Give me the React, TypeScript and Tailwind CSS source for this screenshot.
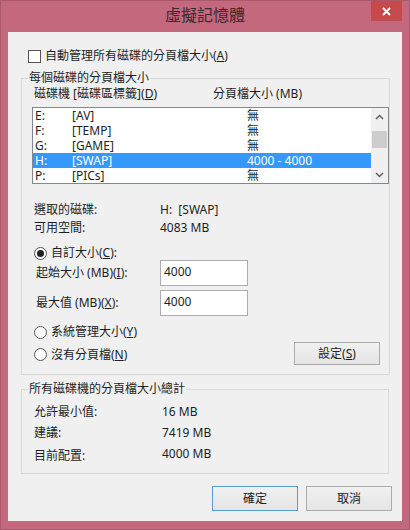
import React from "react";

const drives = [
  { d: "E:", label: "[AV]", size: "無" },
  { d: "F:", label: "[TEMP]", size: "無" },
  { d: "G:", label: "[GAME]", size: "無" },
  { d: "H:", label: "[SWAP]", size: "4000 - 4000", sel: true },
  { d: "P:", label: "[PICs]", size: "無" },
];

function Radio({ checked }: { checked?: boolean }) {
  return (
    <span className="w-[13px] h-[13px] rounded-full border border-[#555] bg-white flex items-center justify-center shrink-0">
      {checked && <span className="w-[7px] h-[7px] rounded-full bg-[#222]" />}
    </span>
  );
}

function Chevron({ up }: { up?: boolean }) {
  return (
    <svg width="9" height="6" viewBox="0 0 9 6">
      <path
        d={up ? "M1 5 L4.5 1.5 L8 5" : "M1 1 L4.5 4.5 L8 1"}
        fill="none"
        stroke="#606060"
        strokeWidth="1.5"
      />
    </svg>
  );
}

function Btn({ children, primary }: { children: React.ReactNode; primary?: boolean }) {
  return (
    <button
      className={
        primary
          ? "w-[86px] h-[25px] border border-[#5a9bd6] bg-gradient-to-b from-[#f0f0f0] to-[#e5e5e5] text-[12px] leading-[15px] text-[#222]"
          : "w-[86px] h-[25px] border border-[#acacac] bg-gradient-to-b from-[#f0f0f0] to-[#e5e5e5] text-[12px] leading-[15px] text-[#222]"
      }
    >
      {children}
    </button>
  );
}

export default function App() {
  return (
    <div className="w-[410px] h-[530px] bg-[#c3687d] border border-[#a9596b] flex flex-col relative [font-family:'Noto_Sans','Noto_Sans_CJK_TC',sans-serif] text-[#1e1e1e]">
      {/* title bar */}
      <div className="h-[31px] flex items-center justify-center pb-[3px]">
        <span className="text-[16px] leading-[20px] text-[#3a2a30]">虛擬記憶體</span>
      </div>
      <div className="absolute top-0 right-[7px] w-[31px] h-[20px] bg-[#c44a4c] flex items-center justify-center">
        <svg width="9" height="9" viewBox="0 0 9 9">
          <path d="M1 1 L8 8 M8 1 L1 8" stroke="#fff" strokeWidth="1.8" />
        </svg>
      </div>

      {/* client area */}
      <div className="mx-[7px] h-[489px] bg-[#f0f0f0] flex flex-col text-[12px]">
        <div className="mt-[17px] h-[14px] ml-[20px] flex items-center gap-[4px]">
          <span className="w-[13px] h-[13px] border border-[#555] bg-white" />
          <span className="leading-[14px]">
            自動管理所有磁碟的分頁檔大小(<span className="underline">A</span>)
          </span>
        </div>

        <fieldset className="mt-[8px] mx-[13px] border border-[#d9d9d9] pb-[9px]">
          <legend className="ml-[6px] px-[1px] leading-[14px]">每個磁碟的分頁檔大小</legend>
          <div className="mt-[2px] h-[14px] ml-[12px] flex leading-[14px]">
            <span className="w-[179px]">
              磁碟機 [磁碟區標籤](<span className="underline">D</span>)
            </span>
            <span>分頁檔大小 (MB)</span>
          </div>

          <div className="mt-[6px] ml-[10px] w-[357px] h-[77px] border border-[#828790] bg-white flex">
            <div className="flex-1 flex flex-col">
              {drives.map((r) => (
                <div
                  key={r.d}
                  className={
                    r.sel
                      ? "h-[15px] flex items-center leading-[13px] pl-[2px] overflow-hidden bg-[#3399ff] text-white"
                      : "h-[15px] flex items-center leading-[13px] pl-[2px] overflow-hidden"
                  }
                >
                  <span className="w-[37px]">{r.d}</span>
                  <span className="w-[175px]">{r.label}</span>
                  <span>{r.size}</span>
                </div>
              ))}
            </div>
            <div className="w-[17px] bg-[#f0f0f0] flex flex-col items-center">
              <div className="h-[17px] flex items-center justify-center">
                <Chevron up />
              </div>
              <div className="flex-1 w-full px-[1px] pt-[6px]">
                <div className="h-[17px] bg-[#cdcdcd]" />
              </div>
              <div className="h-[17px] flex items-center justify-center">
                <Chevron />
              </div>
            </div>
          </div>

          <div className="mt-[17px] ml-[12px] flex flex-col">
            <div className="h-[18px] flex items-center">
              <span className="w-[126px]">選取的磁碟:</span>
              <span>H:&nbsp;&nbsp;[SWAP]</span>
            </div>
            <div className="h-[18px] flex items-center">
              <span className="w-[126px]">可用空間:</span>
              <span>4083 MB</span>
            </div>
          </div>

          <div className="mt-[9px] h-[14px] ml-[12px] flex items-center gap-[4px]">
            <Radio checked />
            <span className="leading-[14px]">
              自訂大小(<span className="underline">C</span>):
            </span>
          </div>
          <div className="h-[26px] ml-[14px] flex items-center">
            <span className="w-[124px]">
              起始大小 (MB)(<span className="underline">I</span>):
            </span>
            <div className="w-[88px] h-[26px] border border-[#abadb3] bg-white pl-[3px] pt-[3px] leading-[15px]">4000</div>
          </div>
          <div className="mt-[4px] h-[26px] ml-[14px] flex items-center">
            <span className="w-[124px]">
              最大值 (MB)(<span className="underline">X</span>):
            </span>
            <div className="w-[88px] h-[26px] border border-[#abadb3] bg-white pl-[3px] pt-[3px] leading-[15px]">4000</div>
          </div>

          <div className="mt-[9px] h-[14px] ml-[12px] flex items-center gap-[4px]">
            <Radio />
            <span className="leading-[14px]">
              系統管理大小(<span className="underline">Y</span>)
            </span>
          </div>
          <div className="mt-[3px] h-[23px] ml-[12px] mr-[9px] flex items-center justify-between">
            <div className="flex items-center gap-[4px] pt-[2px]">
              <Radio />
              <span className="leading-[14px]">
                沒有分頁檔(<span className="underline">N</span>)
              </span>
            </div>
            <button className="w-[86px] h-[23px] border border-[#acacac] bg-gradient-to-b from-[#f0f0f0] to-[#e5e5e5] leading-[15px]">
              設定(<span className="underline">S</span>)
            </button>
          </div>
        </fieldset>

        <fieldset className="mt-[7px] mx-[13px] border border-[#d9d9d9] pb-[9px]">
          <legend className="ml-[6px] px-[1px] leading-[14px]">所有磁碟機的分頁檔大小總計</legend>
          <div className="mt-[5px] ml-[12px] flex flex-col">
            <div className="h-[21px] flex items-center">
              <span className="w-[128px]">允許最小值:</span>
              <span>16 MB</span>
            </div>
            <div className="h-[21px] flex items-center">
              <span className="w-[128px]">建議:</span>
              <span>7419 MB</span>
            </div>
            <div className="h-[21px] flex items-center">
              <span className="w-[128px] pt-[4px]">目前配置:</span>
              <span>4000 MB</span>
            </div>
          </div>
        </fieldset>

        <div className="mt-[12px] mr-[10px] flex justify-end gap-[8px]">
          <Btn primary>確定</Btn>
          <Btn>取消</Btn>
        </div>
      </div>
    </div>
  );
}
